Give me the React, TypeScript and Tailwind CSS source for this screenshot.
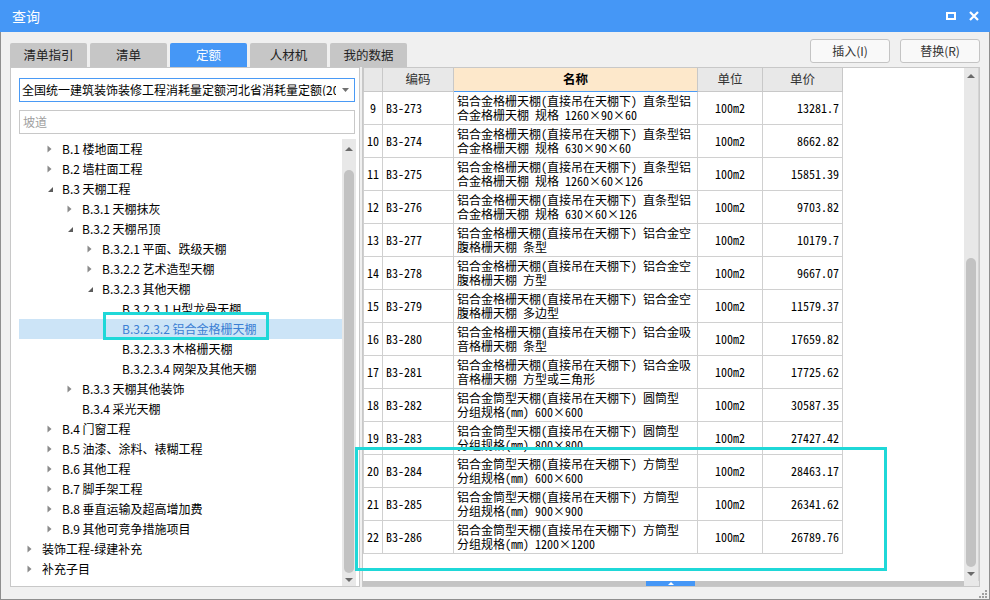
import React from 'react';

type TreeNode = { level: number; arrow: 'r' | 'd' | null; text: string; selected?: boolean };

const tree: TreeNode[] = [
  { level: 1, arrow: 'r', text: 'B.1 楼地面工程' },
  { level: 1, arrow: 'r', text: 'B.2 墙柱面工程' },
  { level: 1, arrow: 'd', text: 'B.3 天棚工程' },
  { level: 2, arrow: 'r', text: 'B.3.1 天棚抹灰' },
  { level: 2, arrow: 'd', text: 'B.3.2 天棚吊顶' },
  { level: 3, arrow: 'r', text: 'B.3.2.1 平面、跌级天棚' },
  { level: 3, arrow: 'r', text: 'B.3.2.2 艺术造型天棚' },
  { level: 3, arrow: 'd', text: 'B.3.2.3 其他天棚' },
  { level: 4, arrow: null, text: 'B.3.2.3.1 H型龙骨天棚' },
  { level: 4, arrow: null, text: 'B.3.2.3.2 铝合金格栅天棚', selected: true },
  { level: 4, arrow: null, text: 'B.3.2.3.3 木格栅天棚' },
  { level: 4, arrow: null, text: 'B.3.2.3.4 网架及其他天棚' },
  { level: 2, arrow: 'r', text: 'B.3.3 天棚其他装饰' },
  { level: 2, arrow: null, text: 'B.3.4 采光天棚' },
  { level: 1, arrow: 'r', text: 'B.4 门窗工程' },
  { level: 1, arrow: 'r', text: 'B.5 油漆、涂料、裱糊工程' },
  { level: 1, arrow: 'r', text: 'B.6 其他工程' },
  { level: 1, arrow: 'r', text: 'B.7 脚手架工程' },
  { level: 1, arrow: 'r', text: 'B.8 垂直运输及超高增加费' },
  { level: 1, arrow: 'r', text: 'B.9 其他可竞争措施项目' },
  { level: 0, arrow: 'r', text: '装饰工程-绿建补充' },
  { level: 0, arrow: 'r', text: '补充子目' },
];

const indent = ['pl-[8px]', 'pl-[28px]', 'pl-[48px]', 'pl-[68px]', 'pl-[88px]'];

const G = '铝合金格栅天棚(直接吊在天棚下) ';
const T = '铝合金筒型天棚(直接吊在天棚下) ';

const rows: [string, string, string, string, string][] = [
  ['9', 'B3-273', G + '直条型铝', '合金格栅天棚 规格 1260×90×60', '13281.7'],
  ['10', 'B3-274', G + '直条型铝', '合金格栅天棚 规格 630×90×60', '8662.82'],
  ['11', 'B3-275', G + '直条型铝', '合金格栅天棚 规格 1260×60×126', '15851.39'],
  ['12', 'B3-276', G + '直条型铝', '合金格栅天棚 规格 630×60×126', '9703.82'],
  ['13', 'B3-277', G + '铝合金空', '腹格栅天棚 条型', '10179.7'],
  ['14', 'B3-278', G + '铝合金空', '腹格栅天棚 方型', '9667.07'],
  ['15', 'B3-279', G + '铝合金空', '腹格栅天棚 多边型', '11579.37'],
  ['16', 'B3-280', G + '铝合金吸', '音格栅天棚 条型', '17659.82'],
  ['17', 'B3-281', G + '铝合金吸', '音格栅天棚 方型或三角形', '17725.62'],
  ['18', 'B3-282', T + '圆筒型', '分组规格(mm) 600×600', '30587.35'],
  ['19', 'B3-283', T + '圆筒型', '分组规格(mm) 800×800', '27427.42'],
  ['20', 'B3-284', T + '方筒型', '分组规格(mm) 600×600', '28463.17'],
  ['21', 'B3-285', T + '方筒型', '分组规格(mm) 900×900', '26341.62'],
  ['22', 'B3-286', T + '方筒型', '分组规格(mm) 1200×1200', '26789.76'],
];

function Arrow({ kind }: { kind: 'r' | 'd' | null }) {
  return (
    <div className="w-[15px] h-full flex items-center shrink-0">
      {kind === 'r' && (
        <svg width="5" height="8" viewBox="0 0 5 8">
          <path d="M0.5 0.5 L4.5 4 L0.5 7.5 Z" fill="#8a8a8a" />
        </svg>
      )}
      {kind === 'd' && (
        <svg width="7" height="7" viewBox="0 0 7 7">
          <path d="M6 1 L6 6 L1 6 Z" fill="#5c5c5c" />
        </svg>
      )}
    </div>
  );
}

const tabs = ['清单指引', '清单', '定额', '人材机', '我的数据'];

export default function App() {
  const ui = "font-['Microsoft_YaHei','Noto_Sans_CJK_SC',sans-serif]";
  const mono = "font-['Noto_Sans_Mono_CJK_SC','Noto_Sans_CJK_SC',monospace]";
  return (
    <div className={`relative w-[990px] h-[600px] flex flex-col bg-[#f0f0f0] ${ui}`}>
      {/* Title bar */}
      <div className="h-[32px] bg-[#4597f6] flex items-center justify-between pl-[12px] pr-[11px] shrink-0">
        <span className="text-white text-[14px] leading-none">查询</span>
        <div className="flex items-center gap-[13px]">
          <svg width="10" height="8" viewBox="0 0 10 8">
            <rect x="1" y="1" width="8" height="6" fill="none" stroke="white" strokeWidth="2" />
          </svg>
          <svg width="10" height="10" viewBox="0 0 10 10">
            <path d="M1 1 L9 9 M9 1 L1 9" stroke="white" strokeWidth="2.2" />
          </svg>
        </div>
      </div>

      {/* Body */}
      <div className="flex-1 flex flex-col border-x border-b border-[#8e8e8e] min-h-0">
        {/* Tabs + buttons */}
        <div className="h-[35px] flex justify-between px-[9px] shrink-0">
          <div className="flex gap-[3px] mt-[11px] h-[24px]">
            {tabs.map((t) => (
              <div
                key={t}
                className={`w-[77px] h-[24px] rounded-t-[2px] flex items-center justify-center text-[12.5px] ${
                  t === '定额' ? 'bg-[#4597f6] text-white' : 'bg-[#c6c6c6] text-[#222]'
                }`}
              >
                {t}
              </div>
            ))}
          </div>
          <div className="flex gap-[10px] mt-[7px] h-[24px]">
            <div className="w-[80px] h-[24px] border border-[#c4c4c4] rounded-[3px] bg-[#f9f9f9] flex items-center justify-center text-[12px] text-[#333]">
              插入(I)
            </div>
            <div className="w-[80px] h-[24px] border border-[#c4c4c4] rounded-[3px] bg-[#f9f9f9] flex items-center justify-center text-[12px] text-[#333]">
              替换(R)
            </div>
          </div>
        </div>

        {/* Main */}
        <div className="h-[520px] flex px-[9px] gap-[2px] shrink-0">
          {/* Left panel */}
          <div className="w-[350px] h-[520px] border border-[#c8c8c8] bg-white flex flex-col pt-[10px] pl-[8px] pr-[3px]">
            <div className="w-[336px] h-[24px] border border-[#4a9af5] flex items-center shrink-0">
              <div className="w-[316px] pl-[2px] overflow-hidden whitespace-nowrap text-[12px] text-black leading-none">
                全国统一建筑装饰装修工程消耗量定额河北省消耗量定额(2018)
              </div>
              <div className="flex-1 flex justify-center">
                <svg width="7" height="4" viewBox="0 0 7 4">
                  <path d="M0 0 L7 0 L3.5 4 Z" fill="#707070" />
                </svg>
              </div>
            </div>
            <div className="w-[336px] h-[24px] border border-[#c8c8c8] mt-[8px] flex items-center pl-[3px] text-[12px] text-[#a0a0a0] shrink-0">
              坡道
            </div>
            <div className="mt-[5px] h-[447px] flex">
              <div className="w-[323px] flex flex-col">
                {tree.map((n) => (
                  <div
                    key={n.text}
                    className={`h-[20px] flex items-center whitespace-nowrap text-[12px] ${indent[n.level]} ${
                      n.selected ? 'bg-[#cce4f7] text-[#3b7fd4]' : 'text-black'
                    }`}
                  >
                    <Arrow kind={n.arrow} />
                    <span className="leading-none">{n.text}</span>
                  </div>
                ))}
              </div>
              <div className="w-[14px] h-[447px] bg-[#e8e8e8] flex flex-col items-center">
                <div className="h-[12px] flex items-end">
                  <svg width="8" height="4" viewBox="0 0 8 4">
                    <path d="M0 4 L8 4 L4 0 Z" fill="#6a6a6a" />
                  </svg>
                </div>
                <div className="mt-[19px] w-[10px] h-[403px] rounded-[5px] bg-[#c2c2c2]" />
                <div className="h-[13px] flex items-center">
                  <svg width="8" height="4" viewBox="0 0 8 4">
                    <path d="M0 0 L8 0 L4 4 Z" fill="#6a6a6a" />
                  </svg>
                </div>
              </div>
            </div>
          </div>

          {/* Right panel */}
          <div className="w-[618px] h-[520px] border border-[#c8c8c8] bg-white flex flex-col">
            <div className="flex h-[513px]">
              <div className={`flex-1 overflow-hidden ${mono} text-[12px] text-black`}>
                {/* header */}
                <div className={`flex h-[24px] ${ui} text-[12.5px] text-[#333]`}>
                  <div className="w-[20px] bg-[#e8e8e8] border-l border-r border-b border-[#c8c8c8]" />
                  <div className="w-[71px] bg-[#e8e8e8] border-r border-b border-[#c8c8c8] flex items-center justify-center">编码</div>
                  <div className="w-[244px] bg-[#fde8cb] border-r border-b border-b-[#4a9af5] border-[#c8c8c8] flex items-center justify-center font-bold text-black">名称</div>
                  <div className="w-[65px] bg-[#e8e8e8] border-r border-b border-[#c8c8c8] flex items-center justify-center">单位</div>
                  <div className="w-[80px] bg-[#e8e8e8] border-r border-b border-[#c8c8c8] flex items-center justify-center">单价</div>
                </div>
                {rows.map((r) => (
                  <div key={r[0]} className="flex h-[33px]">
                    <div className="w-[20px] border-l border-r border-b border-[#d0d0d0] flex items-center justify-center">{r[0]}</div>
                    <div className="w-[71px] border-r border-b border-[#d0d0d0] flex items-center pl-[3px]">{r[1]}</div>
                    <div className="w-[244px] border-r border-b border-[#d0d0d0] flex flex-col justify-center pl-[3px] leading-[14px] whitespace-nowrap overflow-hidden">
                      <span>{r[2]}</span>
                      <span>{r[3]}</span>
                    </div>
                    <div className="w-[65px] border-r border-b border-[#d0d0d0] flex items-center justify-center">100m2</div>
                    <div className="w-[80px] border-r border-b border-[#d0d0d0] flex items-center justify-end pr-[3px]">{r[4]}</div>
                  </div>
                ))}
              </div>
              <div className="w-[14px] h-[513px] bg-[#e8e8e8] border-r border-[#d4d4d4] flex flex-col items-center box-content">
                <div className="h-[16px] flex items-center">
                  <svg width="8" height="4" viewBox="0 0 8 4">
                    <path d="M0 4 L8 4 L4 0 Z" fill="#6a6a6a" />
                  </svg>
                </div>
                <div className="mt-[174px] w-[10px] h-[309px] rounded-[5px] bg-[#c2c2c2]" />
                <div className="h-[14px] flex items-center">
                  <svg width="8" height="4" viewBox="0 0 8 4">
                    <path d="M0 0 L8 0 L4 4 Z" fill="#6a6a6a" />
                  </svg>
                </div>
              </div>
            </div>
            <div className="h-[5px] flex">
              <div className="flex-1 bg-[#c4c4c4] flex">
                <div className="ml-[283px] w-[49px] h-[5px] bg-[#4597f6] flex items-center justify-center">
                  <svg width="6" height="3" viewBox="0 0 6 3">
                    <path d="M0 3 L6 3 L3 0 Z" fill="white" />
                  </svg>
                </div>
              </div>
              <div className="w-[15px] bg-[#e8e8e8]" />
            </div>
          </div>
        </div>
        <div className="flex-1 flex justify-end items-end pr-[2px] pb-[1px]">
          <svg width="9" height="9" viewBox="0 0 9 9">
            <rect x="7" y="1" width="2" height="2" fill="#a0a0a0" />
            <rect x="4" y="4" width="2" height="2" fill="#a0a0a0" />
            <rect x="7" y="4" width="2" height="2" fill="#a0a0a0" />
            <rect x="1" y="7" width="2" height="2" fill="#a0a0a0" />
            <rect x="4" y="7" width="2" height="2" fill="#a0a0a0" />
            <rect x="7" y="7" width="2" height="2" fill="#a0a0a0" />
          </svg>
        </div>
      </div>

      {/* Annotation highlights */}
      <div className="absolute left-[103px] top-[312px] w-[166px] h-[28px] border-[3px] border-[#1fd8d8] pointer-events-none" />
      <div className="absolute left-[355px] top-[447px] w-[532px] h-[124px] border-[3px] border-[#1fd8d8] pointer-events-none" />
    </div>
  );
}
